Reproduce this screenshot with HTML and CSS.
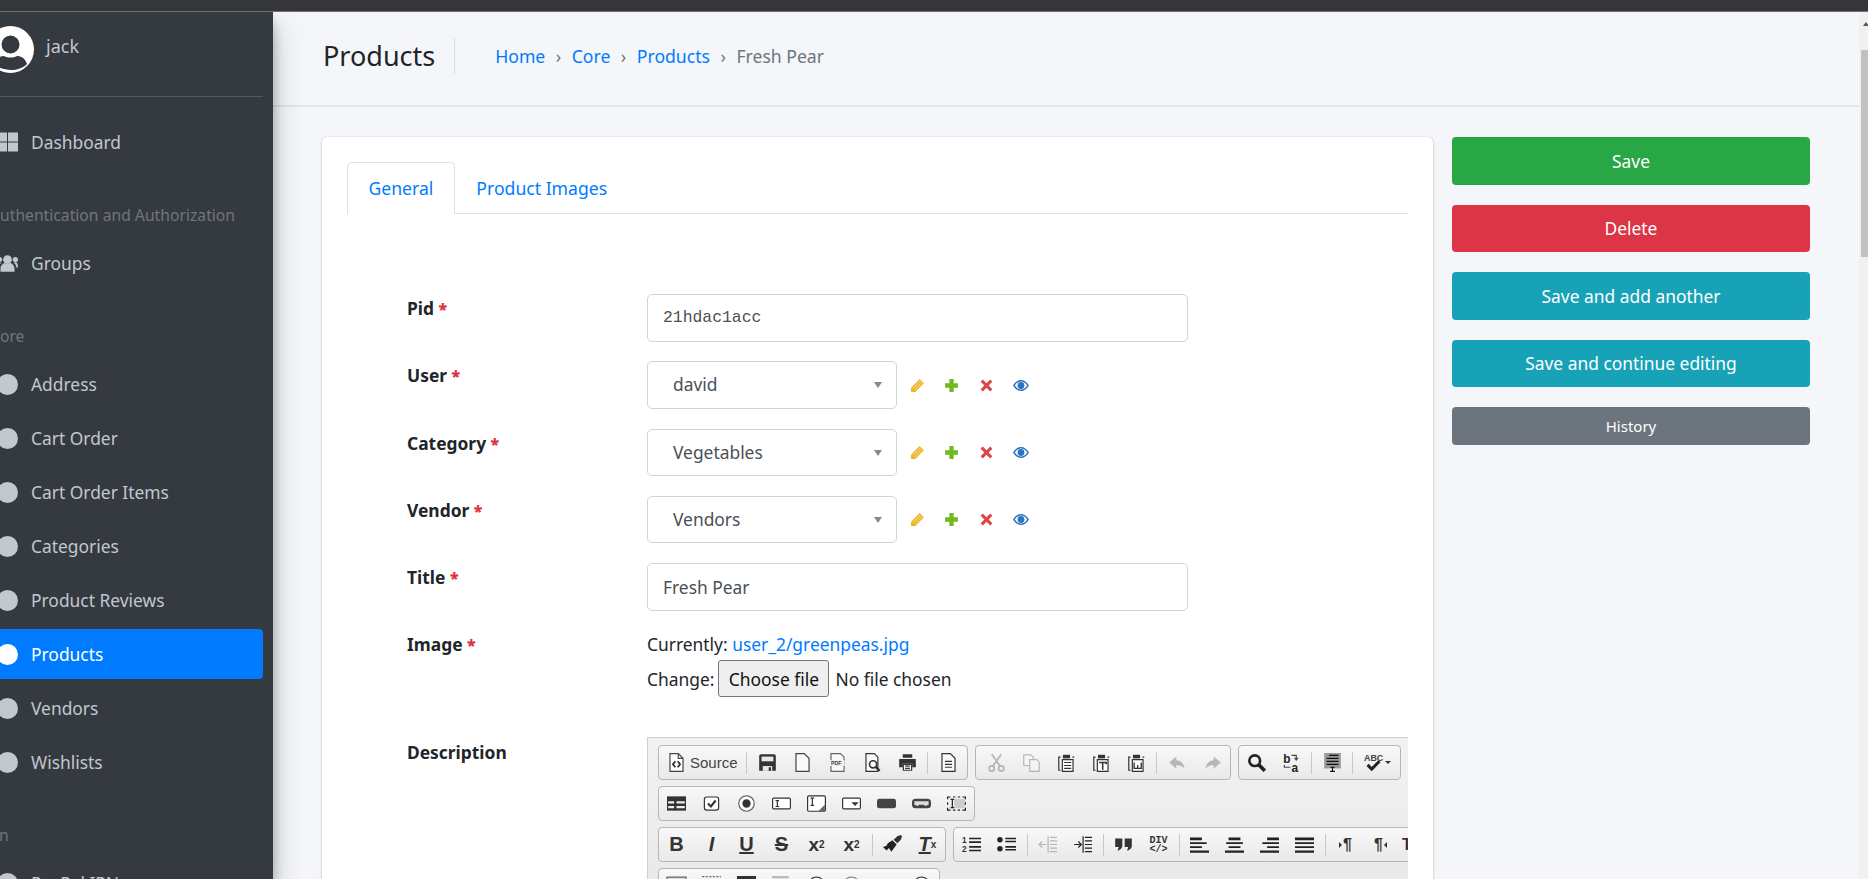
FILE: index.html
```html
<!DOCTYPE html>
<html lang="en">
<head>
    <meta charset="UTF-8">
    <meta name="viewport" content="width=device-width, initial-scale=1.0">
    <title>Products | Fresh Pear</title>
    <link rel="stylesheet" href="styles.css">
</head>
<body>
<div class="topbar"></div>

<div class="app">
    <aside class="sidebar">
        <div class="side-inner">
            <div class="user-panel">
                <svg class="avatar" viewBox="0 0 47 47">
                    <circle cx="23.5" cy="23.5" r="23.5" fill="#fff"/>
                    <circle cx="23.5" cy="18.5" r="9" fill="#343a40"/>
                    <path d="M7 38c2-6 6-8 10-8 4 2 9 2 13 0 4 0 8 2 10 8-4 4-10 6-16 6s-13-2-17-6z" fill="#343a40"/>
                </svg>
                <span class="user-name">jack</span>
            </div>

            <nav class="side-nav">
                <a class="nav-item">
                    <svg class="nav-ic" viewBox="0 0 21 19"><path d="M0 0h10v9H0zM11 0h10v9H11zM0 10h10v9H0zM11 10h10v9H11z" fill="#c2c7d0"/></svg>
                    Dashboard
                </a>
                <div class="nav-head">Authentication and Authorization</div>
                <a class="nav-item">
                    <svg class="nav-ic" viewBox="0 0 24 20"><g fill="#c2c7d0"><circle cx="12" cy="6" r="5"/><path d="M4 20v-4c0-3 3-6 5-6 2 1 4 1 6 0 2 0 5 3 5 6v4z"/><circle cx="3" cy="6" r="3"/><circle cx="21" cy="6" r="3"/><path d="M-1 14c0-3 2-5 4-5l2 1c-2 1-3 3-3 5h-3zM22 15c0-2-1-4-3-5l2-1c2 0 3 2 3 6z"/></g></svg>
                    Groups
                </a>
                <div class="nav-head">Core</div>
                <a class="nav-item"><i class="dot"></i>Address</a>
                <a class="nav-item"><i class="dot"></i>Cart Order</a>
                <a class="nav-item"><i class="dot"></i>Cart Order Items</a>
                <a class="nav-item"><i class="dot"></i>Categories</a>
                <a class="nav-item"><i class="dot"></i>Product Reviews</a>
                <a class="nav-item active"><i class="dot"></i>Products</a>
                <a class="nav-item"><i class="dot"></i>Vendors</a>
                <a class="nav-item"><i class="dot"></i>Wishlists</a>
                <div class="nav-head nav-head-ipn">Ipn</div>
                <a class="nav-item"><i class="dot"></i>PayPal IPN</a>
            </nav>
        </div>
    </aside>

    <main class="main">
        <header class="page-head">
            <h1>Products</h1>
            <ol class="crumbs">
                <li><a>Home</a></li>
                <li><a>Core</a></li>
                <li><a>Products</a></li>
                <li class="current">Fresh Pear</li>
            </ol>
        </header>

        <div class="content">
            <section class="card">
                <div class="card-clip">
                    <ul class="tabs">
                        <li class="tab active">General</li>
                        <li class="tab">Product Images</li>
                    </ul>

                    <form class="tab-pane">
                        <div class="row">
                            <label>Pid <b>*</b></label>
                            <input class="field mono" type="text" value="21hdac1acc">
                        </div>
                        <div class="row">
                            <label>User <b>*</b></label>
                            <div class="pick">david<i class="caret"></i></div>
                            <div class="rel-icons">
                                <svg viewBox="0 0 14 14"><path d="M1 9 9 1l4 4-8 8H1z" fill="#f0b429"/><path d="M3 9.500 10 2.500M4.500 11 11.500 4" stroke="#fff" stroke-width=".5"/></svg>
                                <svg viewBox="0 0 14 14"><path d="M5 1h4v4h4v4H9v4H5V9H1V5h4z" fill="#70b91f"/></svg>
                                <svg viewBox="0 0 14 14"><path d="M3.500 1.500 7 5l3.500-3.500 2 2L9 7l3.500 3.500-2 2L7 9l-3.500 3.500-2-2L5 7 1.500 3.500z" fill="#dd4646"/></svg>
                                <svg class="eye" viewBox="0 0 16 12"><path d="M0 6c2-3.500 5-5.500 8-5.500S14 2.500 16 6c-2 3.500-5 5.500-8 5.500S2 9.500 0 6zm1.800 0C3.500 8.500 5.500 10 8 10s4.500-1.500 6.200-4C12.500 3.500 10.500 2 8 2S3.500 3.500 1.800 6z" fill="#2e73bf"/><circle cx="8" cy="6" r="3.400" fill="#2e73bf"/></svg>
                            </div>
                        </div>
                        <div class="row">
                            <label>Category <b>*</b></label>
                            <div class="pick">Vegetables<i class="caret"></i></div>
                            <div class="rel-icons">
                                <svg viewBox="0 0 14 14"><path d="M1 9 9 1l4 4-8 8H1z" fill="#f0b429"/><path d="M3 9.500 10 2.500M4.500 11 11.500 4" stroke="#fff" stroke-width=".5"/></svg>
                                <svg viewBox="0 0 14 14"><path d="M5 1h4v4h4v4H9v4H5V9H1V5h4z" fill="#70b91f"/></svg>
                                <svg viewBox="0 0 14 14"><path d="M3.500 1.500 7 5l3.500-3.500 2 2L9 7l3.500 3.500-2 2L7 9l-3.500 3.500-2-2L5 7 1.500 3.500z" fill="#dd4646"/></svg>
                                <svg class="eye" viewBox="0 0 16 12"><path d="M0 6c2-3.500 5-5.500 8-5.500S14 2.500 16 6c-2 3.500-5 5.500-8 5.500S2 9.500 0 6zm1.800 0C3.500 8.500 5.500 10 8 10s4.500-1.500 6.200-4C12.500 3.500 10.500 2 8 2S3.500 3.500 1.800 6z" fill="#2e73bf"/><circle cx="8" cy="6" r="3.400" fill="#2e73bf"/></svg>
                            </div>
                        </div>
                        <div class="row">
                            <label>Vendor <b>*</b></label>
                            <div class="pick">Vendors<i class="caret"></i></div>
                            <div class="rel-icons">
                                <svg viewBox="0 0 14 14"><path d="M1 9 9 1l4 4-8 8H1z" fill="#f0b429"/><path d="M3 9.500 10 2.500M4.500 11 11.500 4" stroke="#fff" stroke-width=".5"/></svg>
                                <svg viewBox="0 0 14 14"><path d="M5 1h4v4h4v4H9v4H5V9H1V5h4z" fill="#70b91f"/></svg>
                                <svg viewBox="0 0 14 14"><path d="M3.500 1.500 7 5l3.500-3.500 2 2L9 7l3.500 3.500-2 2L7 9l-3.500 3.500-2-2L5 7 1.500 3.500z" fill="#dd4646"/></svg>
                                <svg class="eye" viewBox="0 0 16 12"><path d="M0 6c2-3.500 5-5.500 8-5.500S14 2.500 16 6c-2 3.500-5 5.500-8 5.500S2 9.500 0 6zm1.800 0C3.500 8.500 5.500 10 8 10s4.500-1.500 6.200-4C12.500 3.500 10.500 2 8 2S3.500 3.500 1.800 6z" fill="#2e73bf"/><circle cx="8" cy="6" r="3.400" fill="#2e73bf"/></svg>
                            </div>
                        </div>
                        <div class="row">
                            <label>Title <b>*</b></label>
                            <input class="field" type="text" value="Fresh Pear">
                        </div>
                        <div class="row row-image">
                            <label>Image <b>*</b></label>
                            <div class="file-box">
                                <div>Currently: <a>user_2/greenpeas.jpg</a></div>
                                <div class="file-line">Change: <span class="file-btn">Choose file</span> <span>No file chosen</span></div>
                            </div>
                        </div>
                        <div class="row row-desc">
                            <label>Description</label>
                            <div class="editor">
                                <div class="tb-row">
                                    <div class="tb-group tb-first">
                                        <a class="btn btn-source">
                                            <svg class="ic" viewBox="0 0 16 16"><path d="M2.500.500h7l4 4v11h-11z" fill="#fff" stroke="#444"/><path d="M9.500.500v4h4" fill="none" stroke="#444"/><path d="M7 7 5 9.500 7 12M9 7l2 2.500L9 12" fill="none" stroke="#333" stroke-width="1.500"/></svg>
                                            <span>Source</span>
                                        </a>
                                        <i class="sep"></i>
                                        <a class="btn"><svg class="ic" viewBox="0 0 16 16"><path d="M1 2.500A1.500 1.500 0 0 1 2.500 1h11A1.500 1.500 0 0 1 15 2.500V15H1z" fill="#333"/><path d="M3 3h10v4H3z" fill="#e8e8e8"/><path d="M4 11h8v4H4z" fill="#e8e8e8"/><path d="M9 12h2v3H9z" fill="#333"/></svg></a>
                                        <a class="btn"><svg class="ic" viewBox="0 0 16 16"><path d="M2.500.500h7l4 4v11h-11z" fill="#fafafa" stroke="#444"/></svg></a>
                                        <a class="btn"><svg class="ic" viewBox="0 0 16 16"><path d="M2.500.500h8l3 3v12h-11z" fill="#fafafa" stroke="#666"/><path d="M0 6h14v5H0z" fill="#eee"/><text class="ic-tiny" x="7" y="10.500" text-anchor="middle">PDF</text></svg></a>
                                        <a class="btn"><svg class="ic" viewBox="0 0 16 16"><path d="M2.500.500h7l3 3v12h-10z" fill="#fafafa" stroke="#333"/><circle cx="8.500" cy="9.500" r="3" fill="#fff" stroke="#333" stroke-width="1.400"/><path d="m10.500 11.500 3.500 3.500" stroke="#333" stroke-width="2"/></svg></a>
                                        <a class="btn"><svg class="ic" viewBox="0 0 16 16"><path d="M4 1h8v3H4zM1 5h14v7h-3V9H4v3H1z" fill="#333"/><path d="M4.500 9.500h7v5h-7z" fill="#fff" stroke="#333"/><path d="M6 11h4M6 13h4" stroke="#333"/></svg></a>
                                        <i class="sep"></i>
                                        <a class="btn"><svg class="ic" viewBox="0 0 16 16"><path d="M2.500.500h7l4 4v11h-11z" fill="#fafafa" stroke="#333"/><path d="M5 7h6M5 9.500h6M5 12h6" stroke="#333"/></svg></a>
                                    </div>
                                    <div class="tb-group tb-pad">
                                        <a class="btn off"><svg class="ic" viewBox="0 0 16 16"><circle cx="4" cy="13" r="2.200" fill="none" stroke="#333" stroke-width="1.400"/><circle cx="12" cy="13" r="2.200" fill="none" stroke="#333" stroke-width="1.400"/><path d="M5 11 12 1M11 11 4 1" stroke="#333" stroke-width="1.500"/></svg></a>
                                        <a class="btn off"><svg class="ic" viewBox="0 0 16 16"><path d="M1.500 1.500h6l2 2v7h-8z" fill="#fff" stroke="#333"/><path d="M6.500 5.500h6l2 2v8h-8z" fill="#fff" stroke="#333"/></svg></a>
                                        <a class="btn"><svg class="ic" viewBox="0 0 16 16"><path d="M3 3.500H1.500v11H3M13 3.500h1.500" fill="none" stroke="#333"/><path d="M5 1.500h6v3H5z" fill="#333"/><path d="M4.500 5.500h9v10h-9z" fill="#fff" stroke="#333"/><path d="M6 8h6M6 10.500h6M6 13h6" stroke="#333"/></svg></a>
                                        <a class="btn"><svg class="ic" viewBox="0 0 16 16"><path d="M3 3.500H1.500v11H3M13 3.500h1.500" fill="none" stroke="#333"/><path d="M5 1.500h6v3H5z" fill="#333"/><path d="M4.500 5.500h9v10h-9z" fill="#fff" stroke="#333"/><path d="M6 8h6v1.500M9 8v6" fill="none" stroke="#333" stroke-width="1.300"/></svg></a>
                                        <a class="btn"><svg class="ic" viewBox="0 0 16 16"><path d="M3 3.500H1.500v11H3M13 3.500h1.500" fill="none" stroke="#333"/><path d="M5 1.500h6v3H5z" fill="#333"/><path d="M4.500 5.500h9v10h-9z" fill="#fff" stroke="#333"/><path d="M6 8v5h6V8M9 10v3" fill="none" stroke="#333" stroke-width="1.100"/></svg></a>
                                        <i class="sep"></i>
                                        <a class="btn off"><svg class="ic" viewBox="0 0 16 16"><path d="M7 3 1 8l6 5V10c3 0 5 1 7 3-1-4-3-7-7-7z" fill="#333"/></svg></a>
                                        <a class="btn off"><svg class="ic" viewBox="0 0 16 16"><path d="m9 3 6 5-6 5v-3c-3 0-5 1-7 3 1-4 3-7 7-7z" fill="#333"/></svg></a>
                                    </div>
                                    <div class="tb-group">
                                        <a class="btn"><svg class="ic" viewBox="0 0 16 16"><circle cx="6.500" cy="6.500" r="4.500" fill="none" stroke="#222" stroke-width="2.200"/><path d="m10 10 5 5" stroke="#222" stroke-width="3"/></svg></a>
                                        <a class="btn"><svg class="ic" viewBox="0 0 16 16"><text class="ic-b" x="1" y="8">b</text><text class="ic-b" x="8" y="16">a</text><path d="M8 2h4v3M10.500 4l1.500 2 1.500-2M7 12H2v-2" fill="none" stroke="#444"/></svg></a>
                                        <i class="sep"></i>
                                        <a class="btn"><svg class="ic" viewBox="0 0 16 16"><path d="M1 0h14v13H1z" fill="#999"/><path d="M5 2h8M3 4.500h10M3 7h10M3 9.500h10" stroke="#111"/><path d="M6 12h4M8 12v4M6 15.500h4" stroke="#111"/></svg></a>
                                        <i class="sep"></i>
                                        <a class="btn btn-spell"><svg class="ic" viewBox="0 0 16 16"><text class="ic-abc" x="0" y="7">ABC</text><path d="m3 10 3.500 3.500L13 7" fill="none" stroke="#222" stroke-width="2.500"/></svg><i class="mini-caret"></i></a>
                                    </div>
                                </div>

                                <div class="tb-row">
                                    <div class="tb-group">
                                        <a class="btn"><svg class="ic" viewBox="0 0 16 16"><path d="M0 2h16v12H0z" fill="#333"/><path d="M1 6h5v2H1zM8 6h7v2H8zM1 10h5v2H1zM8 10h7v2H8z" fill="#eee"/></svg></a>
                                        <a class="btn"><svg class="ic" viewBox="0 0 16 16"><rect x="2" y="2.500" width="12" height="11" rx="2" fill="#fff" stroke="#333"/><path d="m5 8 2.500 2.500L11.500 5.500" fill="none" stroke="#333" stroke-width="1.800"/></svg></a>
                                        <a class="btn"><svg class="ic" viewBox="0 0 16 16"><circle cx="8" cy="8" r="6.500" fill="#fff" stroke="#666"/><circle cx="8" cy="8" r="3.500" fill="#333"/></svg></a>
                                        <a class="btn"><svg class="ic" viewBox="0 0 16 16"><rect x=".500" y="3.500" width="15" height="9" rx="1" fill="#fff" stroke="#333"/><path d="M3 5.500h3M3 10.500h3M4.500 5.500v5" stroke="#333"/></svg></a>
                                        <a class="btn"><svg class="ic" viewBox="0 0 16 16"><rect x=".500" y="1.500" width="15" height="13" rx="1" fill="#fff" stroke="#333"/><path d="M3 3.500h3M3 9.500h3M4.500 3.500v6" stroke="#333"/><path d="m15 9-6 6h6z" fill="#666"/></svg></a>
                                        <a class="btn"><svg class="ic" viewBox="0 0 16 16"><rect x=".500" y="3.500" width="15" height="9" rx="1" fill="#fff" stroke="#333"/><path d="M8 7h6l-3 3z" fill="#333"/></svg></a>
                                        <a class="btn"><svg class="ic" viewBox="0 0 16 16"><rect y="4" width="16" height="8" rx="2" fill="#444"/></svg></a>
                                        <a class="btn"><svg class="ic" viewBox="0 0 16 16"><rect y="4" width="16" height="8" rx="3" fill="#444"/><path d="M2 6h12v3l-3 1-1-1H6L5 10 2 9z" fill="#ddd"/></svg></a>
                                        <a class="btn"><svg class="ic" viewBox="0 0 16 16"><path d="M6 4h9v8H6z" fill="#ccc"/><path d="M3 2.500H.500v2M.500 7v2M.500 11.500v2H3M5 2.500h2M9 2.500h2M13 2.500h2.500v2M15.500 7v2M15.500 11.500v2H13M9 13.500h2M5 13.500h2" fill="none" stroke="#222"/><path d="M3 4.500h3M3 11.500h3M4.500 4.500v7" stroke="#222"/></svg></a>
                                    </div>
                                </div>

                                <div class="tb-row">
                                    <div class="tb-group">
                                        <a class="btn bt-b">B</a>
                                        <a class="btn bt-i">I</a>
                                        <a class="btn bt-u">U</a>
                                        <a class="btn bt-s">S</a>
                                        <a class="btn bt-x">x<sub>2</sub></a>
                                        <a class="btn bt-x">x<sup>2</sup></a>
                                        <i class="sep"></i>
                                        <a class="btn"><svg class="ic" viewBox="0 0 16 16"><path d="M9 4 12 1l3-1 1 1-1 3-3 3z" fill="#333"/><path d="M8 4.500 11.500 8 7 14 5 11 3 13 0 10l3-1 1-2z" fill="#222"/></svg></a>
                                        <a class="btn bt-tx"><span>T</span><sub>x</sub></a>
                                    </div>
                                    <div class="tb-group">
                                        <a class="btn"><svg class="ic" viewBox="0 0 16 16"><text class="ic-num" x="0" y="7">1</text><text class="ic-num" x="0" y="14">2</text><path d="M6 3h10M6 6h10M6 10h10M6 13h10" stroke="#222" stroke-width="1.300"/></svg></a>
                                        <a class="btn"><svg class="ic" viewBox="0 0 16 16"><circle cx="2.500" cy="4" r="2.300" fill="#222"/><circle cx="2.500" cy="11.500" r="2.300" fill="#222"/><path d="M7 3h9M7 5.500h9M7 10h9M7 12.500h9" stroke="#222" stroke-width="1.300"/></svg></a>
                                        <i class="sep"></i>
                                        <a class="btn off"><svg class="ic" viewBox="0 0 16 16"><path d="M8.500 1v14M10 2h6M10 5h6M10 8h6M10 11h6M10 14h6" stroke="#333"/><path d="M7 8H1M3.500 5.500 1 8l2.500 2.500" fill="none" stroke="#333"/></svg></a>
                                        <a class="btn"><svg class="ic" viewBox="0 0 16 16"><path d="M8.500 1v14M10 2h6M10 5h6M10 8h6M10 11h6M10 14h6" stroke="#222"/><path d="M1 8h6M4.500 5.500 7 8l-2.500 2.500" fill="none" stroke="#222"/></svg></a>
                                        <i class="sep"></i>
                                        <a class="btn"><svg class="ic" viewBox="0 0 16 16"><path d="M1 3h6v6c0 2-2 4-4 4l1-3H1zM9 3h6v6c0 2-2 4-4 4l1-3H9z" fill="#333"/></svg></a>
                                        <a class="btn bt-div"><span>DIV</span><span>&lt;/&gt;</span></a>
                                        <i class="sep"></i>
                                        <a class="btn"><svg class="ic" viewBox="0 0 16 16"><path d="M0 2h10v2.500H0zM0 6h14v1.500H0zM0 9.500h10V11H0zM0 13h16v2H0z" fill="#222"/></svg></a>
                                        <a class="btn"><svg class="ic" viewBox="0 0 16 16"><path d="M3 2h10v2.500H3zM1 6h14v1.500H1zM3 9.500h10V11H3zM0 13h16v2H0z" fill="#222"/></svg></a>
                                        <a class="btn"><svg class="ic" viewBox="0 0 16 16"><path d="M6 2h10v2.500H6zM2 6h14v1.500H2zM6 9.500h10V11H6zM0 13h16v2H0z" fill="#222"/></svg></a>
                                        <a class="btn"><svg class="ic" viewBox="0 0 16 16"><path d="M0 2h16v2.500H0zM0 6h16v1.500H0zM0 9.500h16V11H0zM0 13h16v2H0z" fill="#222"/></svg></a>
                                        <i class="sep"></i>
                                        <a class="btn bt-bidi"><i class="tri-r"></i>¶</a>
                                        <a class="btn bt-bidi">¶<i class="tri-l"></i></a>
                                        <a class="btn bt-bidi bt-lang">T</a>
                                    </div>
                                </div>

                                <div class="tb-row">
                                    <div class="tb-group tb-last">
                                        <a class="btn"><svg class="ic" viewBox="0 0 16 16"><path d="M0 1h16v14H0z" fill="#ddd" stroke="#666"/></svg></a>
                                        <a class="btn"><svg class="ic" viewBox="0 0 16 16"><path d="M0 .500h16" stroke="#777" stroke-dasharray="2 1"/><path d="M0 3h16" stroke="#aaa"/></svg></a>
                                        <a class="btn"><svg class="ic" viewBox="0 0 16 16"><path d="M0 0h16v16H0z" fill="#333"/></svg></a>
                                        <a class="btn"><svg class="ic" viewBox="0 0 16 16"><path d="M0 0h14v2H0z" fill="#bbb"/></svg></a>
                                        <a class="btn"><svg class="ic" viewBox="0 0 16 16"><circle cx="8" cy="8" r="7" fill="#fff" stroke="#444"/></svg></a>
                                        <a class="btn"><svg class="ic" viewBox="0 0 16 16"><circle cx="8" cy="8" r="7" fill="#fff" stroke="#888"/></svg></a>
                                        <a class="btn"></a>
                                        <a class="btn"><svg class="ic" viewBox="0 0 16 16"><circle cx="8" cy="8" r="7" fill="#fff" stroke="#444"/></svg></a>
                                    </div>
                                </div>
                            </div>
                        </div>
                    </form>
                </div>
            </section>

            <aside class="actions">
                <a class="act green">Save</a>
                <a class="act red">Delete</a>
                <a class="act teal">Save and add another</a>
                <a class="act teal">Save and continue editing</a>
                <a class="act gray">History</a>
            </aside>
        </div>
    </main>

    <div class="scroll-track">
        <i class="scroll-up"></i>
        <div class="scroll-thumb"></div>
    </div>
</div>
</body>
</html>
```

FILE: styles.css
```css
* {
    box-sizing: border-box;
}

html, body {
    height: 879px;
    margin: 0;
    overflow: hidden;
}

body {
    font-family: "Noto Sans", Arial, sans-serif;
    font-size: 17.4px;
    color: #212529;
    background: #f4f6f9;
}

a {
    color: #007bff;
    text-decoration: none;
}

.topbar {
    height: 12px;
    background: #35363a;
    border-bottom: 1px solid #6e6e70;
}

.app {
    display: flex;
    height: 867px;
}

/* sidebar */
.sidebar {
    position: relative;
    z-index: 2;
    flex: 0 0 273px;
    overflow: hidden;
    background: #343a40;
    box-shadow: 0 14px 28px rgba(0, 0, 0, .25), 0 10px 10px rgba(0, 0, 0, .22);
    clip-path: inset(0 -30px 0 0);
}

.side-inner {
    width: 287px;
    margin-left: -14px;
    padding-right: 10px;
}

.user-panel {
    display: flex;
    align-items: flex-start;
    height: 85px;
    padding: 14px 0 0 1px;
    border-bottom: 1px solid #4f5962;
}

.avatar {
    width: 47px;
    height: 47px;
    margin-right: 12px;
}

.user-name {
    margin-top: 8px;
    font-size: 18px;
    color: #c2c7d0;
}

.side-nav {
    padding-top: 20px;
}

.nav-item {
    display: flex;
    align-items: center;
    height: 50px;
    margin-bottom: 4px;
    padding-left: 11px;
    color: #c2c7d0;
    border-radius: 4px;
}

.nav-item.active {
    color: #fff;
    background: #007bff;
}

.nav-ic {
    flex: none;
    width: 21px;
    height: 20px;
    margin-right: 13px;
    overflow: visible;
}

.dot {
    flex: none;
    width: 21px;
    height: 21px;
    margin-right: 13px;
    border-radius: 50%;
    background: #c2c7d0;
}

.active .dot {
    background: #fff;
}

.nav-head {
    height: 67px;
    padding: 32px 0 0 4px;
    font-size: 15.700px;
    line-height: 24px;
    white-space: nowrap;
    color: #71767b;
}

.nav-head-ipn {
    padding-left: 0;
    margin-left: -2px;
}

/* main */
.main {
    flex: 1;
    min-width: 0;
    overflow: hidden;
}

.page-head {
    display: flex;
    align-items: center;
    height: 95px;
    padding: 0 0 5px 50px;
    border-bottom: 2px solid #e1e4e8;
}

.page-head h1 {
    margin: 0;
    padding-right: 19px;
    font-size: 27px;
    font-weight: 400;
    line-height: 36px;
    border-right: 1px solid #d9dce0;
}

.crumbs {
    display: flex;
    margin: 0 0 0 40px;
    padding: 0;
    font-size: 17.600px;
    list-style: none;
}

.crumbs li + li::before {
    content: "›";
    padding: 0 10.500px;
    color: #6c757d;
}

.crumbs .current {
    color: #6c757d;
}

.content {
    display: flex;
    gap: 19px;
    padding: 30px 0 0 49px;
}

.card {
    flex: 0 0 1111px;
    min-width: 0;
    padding: 25px;
    border-radius: 5px;
    background: #fff;
    box-shadow: 0 0 1px rgba(0, 0, 0, .2), 0 1px 3px rgba(0, 0, 0, .2);
}

.card-clip {
    overflow: hidden;
}

.tabs {
    display: flex;
    height: 52px;
    margin: 0;
    padding: 0;
    font-size: 17.600px;
    list-style: none;
    border-bottom: 1px solid #dee2e6;
}

.tab {
    height: 52px;
    padding: 13px 20.500px 0;
    color: #007bff;
    border: 1px solid transparent;
    border-radius: 5px 5px 0 0;
}

.tab.active {
    background: #fff;
    border-color: #dee2e6 #dee2e6 #fff;
}

.tab-pane {
    margin-top: 21px;
    padding: 58px 0 0 60px;
    border-top: 1px solid #fcfcfc;
    border-radius: 5px;
}

.row {
    display: flex;
    align-items: flex-start;
    margin-bottom: 19.700px;
}

.row label {
    flex: 0 0 240px;
    padding-top: 1px;
    font-weight: 700;
    line-height: 27px;
}

.row label b {
    font-size: 16px;
    color: #dc3545;
}

.field {
    width: 541px;
    height: 47.600px;
    padding: 0 15px;
    font: inherit;
    color: #495057;
    border: 1px solid #ced4da;
    border-radius: 5px;
    background: #fff;
}

.mono {
    font-family: "Liberation Mono", monospace;
    font-size: 16.400px;
}

.pick {
    position: relative;
    width: 250px;
    height: 47.600px;
    padding: 0 25px;
    line-height: 45px;
    color: #495057;
    border: 1px solid #ced4da;
    border-radius: 5px;
}

.caret {
    position: absolute;
    right: 14px;
    top: 20px;
    border-top: 6px solid #888;
    border-left: 4.500px solid transparent;
    border-right: 4.500px solid transparent;
}

.rel-icons {
    display: flex;
    align-items: center;
    gap: 19.300px;
    height: 47.600px;
    padding-left: 13px;
}

.rel-icons svg {
    width: 15px;
    height: 15px;
}

.rel-icons .eye {
    width: 16px;
}

.row-image {
    margin: 6.500px 0 40px;
}

.file-box {
    padding-top: 2px;
}

.file-line {
    display: flex;
    align-items: center;
    gap: 4px;
    margin-top: 4px;
}

.file-btn {
    display: flex;
    align-items: center;
    justify-content: center;
    width: 111px;
    height: 37px;
    margin-right: 2px;
    color: #111;
    background: #efefef;
    border: 1px solid #767676;
    border-radius: 3px;
}

/* editor toolbar */
.row-desc label {
    padding-top: 2px;
}

.editor {
    flex: none;
    width: 900px;
    height: 300px;
    padding: 7px 0 0 10px;
    border: 1px solid #d1d1d1;
    background: linear-gradient(#f2f2f2, #e8e8e8 160px);
}

.tb-row {
    display: flex;
    gap: 7px;
    height: 35px;
    margin-bottom: 6px;
}

.tb-group {
    display: flex;
    align-items: center;
    flex: none;
    border: 1px solid #b6b6b6;
    border-radius: 4px;
    background: linear-gradient(#f8f8f8, #e9e9e9);
}

.tb-first {
    width: 310px;
}

.tb-pad {
    padding-left: 2.500px;
}

.btn {
    display: flex;
    align-items: center;
    justify-content: center;
    flex: none;
    width: 35px;
    height: 33px;
    color: #333;
}

.btn.off {
    opacity: .3;
}

.ic {
    width: 19px;
    height: 19px;
    overflow: visible;
}

.ic-tiny {
    font: 700 4.500px "Liberation Sans", Arial, sans-serif;
    fill: #444;
}

.ic-abc {
    font: 700 7.500px "Liberation Sans", Arial, sans-serif;
    fill: #444;
}

.ic-num {
    font: 700 7px "Liberation Sans", Arial, sans-serif;
    fill: #333;
}

.ic-b {
    font: 700 10px "Liberation Sans", Arial, sans-serif;
    fill: #222;
}

.btn-source {
    width: 84.500px;
    justify-content: flex-start;
    padding-left: 8px;
    gap: 4px;
    font: 15px "Liberation Sans", Arial, sans-serif;
    color: #444;
}

.btn-spell {
    width: 44px;
    gap: 2px;
}

.mini-caret {
    border-top: 3px solid #333;
    border-left: 3px solid transparent;
    border-right: 3px solid transparent;
}

.sep {
    flex: none;
    width: 1px;
    height: 22px;
    margin: 0 2.500px;
    background: #c8c8c8;
}

.bt-b, .bt-i, .bt-u, .bt-s, .bt-x, .bt-tx {
    font: 700 20px "Liberation Sans", Arial, sans-serif;
}

.bt-i {
    font-style: italic;
}

.bt-u {
    text-decoration: underline;
}

.bt-s {
    text-decoration: line-through;
}

.bt-x {
    font-size: 19px;
}

.bt-x sub, .bt-x sup, .bt-tx sub {
    font-size: 10px;
}

.bt-tx span {
    font-style: italic;
    text-decoration: underline;
}

.bt-div {
    flex-direction: column;
    font: 700 10px/9px "Liberation Mono", monospace;
}

.bt-bidi {
    gap: 1px;
    font: 700 16px "Liberation Sans", Arial, sans-serif;
}

.bt-lang {
    justify-content: flex-start;
    padding-left: 4px;
}

.tri-r {
    border-left: 3px solid #333;
    border-top: 3px solid transparent;
    border-bottom: 3px solid transparent;
}

.tri-l {
    border-right: 3px solid #333;
    border-top: 3px solid transparent;
    border-bottom: 3px solid transparent;
}

/* right column */
.actions {
    flex: 0 0 358px;
    display: flex;
    flex-direction: column;
    gap: 20px;
}

.act {
    display: flex;
    align-items: center;
    justify-content: center;
    height: 47.500px;
    color: #fff;
    border-radius: 4px;
}

.green { background: #28a745; }
.red { background: #dc3545; }
.teal { background: #17a2b8; }

.gray {
    height: 38px;
    font-size: 15px;
    background: #6c757d;
}

/* scrollbar */
.scroll-track {
    flex: 0 0 9px;
    position: relative;
    background: #f1f1f1;
}

.scroll-up {
    position: absolute;
    top: 10px;
    right: -1px;
    border-bottom: 4px solid #555;
    border-left: 3px solid transparent;
    border-right: 3px solid transparent;
}

.scroll-thumb {
    height: 207px;
    margin: 38px 0 0 2px;
    background: #c1c1c1;
}
```
